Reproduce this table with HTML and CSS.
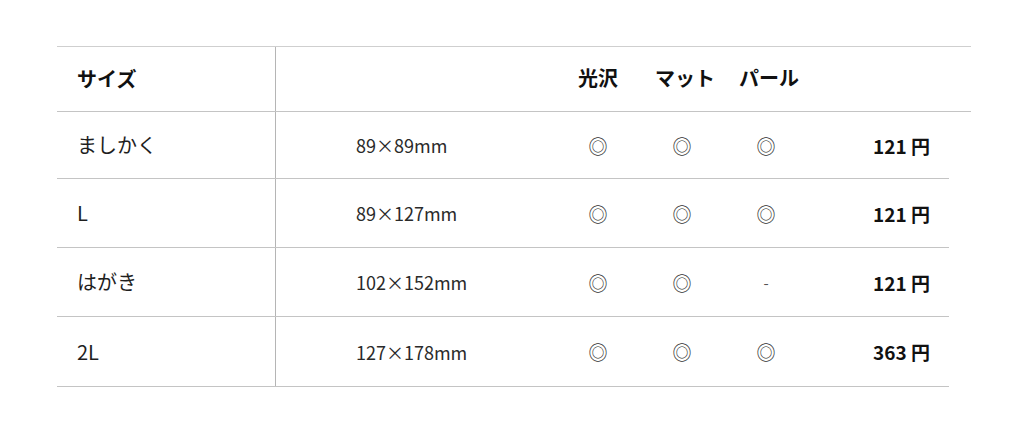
FILE: index.html
```html
<!DOCTYPE html>
<html lang="ja">
<head>
<meta charset="utf-8">
<title>サイズ</title>
<link rel="stylesheet" href="styles.css">
</head>
<body>
<div class="table">
  <div class="row head">
    <div class="cell name">サイズ</div>
    <div class="cell size"></div>
    <div class="cell mark">光沢</div>
    <div class="cell mark shift">マット</div>
    <div class="cell mark shift">パール</div>
    <div class="cell price"></div>
  </div>
  <div class="row first">
    <div class="cell name">ましかく</div>
    <div class="cell size">89×89mm</div>
    <div class="cell mark">◎</div>
    <div class="cell mark">◎</div>
    <div class="cell mark">◎</div>
    <div class="cell price">121 円</div>
  </div>
  <div class="row">
    <div class="cell name">L</div>
    <div class="cell size">89×127mm</div>
    <div class="cell mark">◎</div>
    <div class="cell mark">◎</div>
    <div class="cell mark">◎</div>
    <div class="cell price">121 円</div>
  </div>
  <div class="row">
    <div class="cell name">はがき</div>
    <div class="cell size">102×152mm</div>
    <div class="cell mark">◎</div>
    <div class="cell mark">◎</div>
    <div class="cell mark dash">-</div>
    <div class="cell price">121 円</div>
  </div>
  <div class="row last">
    <div class="cell name">2L</div>
    <div class="cell size">127×178mm</div>
    <div class="cell mark">◎</div>
    <div class="cell mark">◎</div>
    <div class="cell mark">◎</div>
    <div class="cell price">363 円</div>
  </div>
</div>
</body>
</html>
```
FILE: styles.css
```css
html, body {
  margin: 0;
  padding: 0;
  background: #ffffff;
}
body {
  font-family: "Noto Sans CJK JP", "Noto Sans", sans-serif;
  color: #1e1e1e;
}
.table {
  padding: 46px 0 0 57px;
}
.row {
  display: grid;
  grid-template-columns: 218px 281px 84px 84px 84px 141px;
  width: 892px;
  height: 69px;
  border-bottom: 1px solid #c4c4c4;
  box-sizing: border-box;
}
.row.first {
  height: 67px;
}
.row.last {
  height: 70px;
}
.row.head {
  grid-template-columns: 218px 281px 84px 84px 84px 163px;
  width: 914px;
  height: 66px;
  border-top: 1px solid #cfcfcf;
}
.cell {
  display: flex;
  align-items: center;
  line-height: 1;
}
.name {
  padding-left: 20px;
  font-size: 20px;
}
.head .name,
.head .mark {
  font-weight: bold;
  font-size: 20px;
  color: #111;
}
.head .mark {
  padding-bottom: 3px;
}
.head .mark.shift {
  padding-left: 6px;
}
.size {
  border-left: 1px solid #b5b5b5;
  padding-left: 80px;
  font-size: 18px;
  color: #2a2a2a;
}
.mark {
  justify-content: center;
  font-size: 19px;
  color: #333;
}
.mark.dash {
  font-size: 15px;
  color: #555;
}
.price {
  justify-content: flex-end;
  padding-right: 19px;
  font-size: 19px;
  font-weight: bold;
  color: #111;
}
```
